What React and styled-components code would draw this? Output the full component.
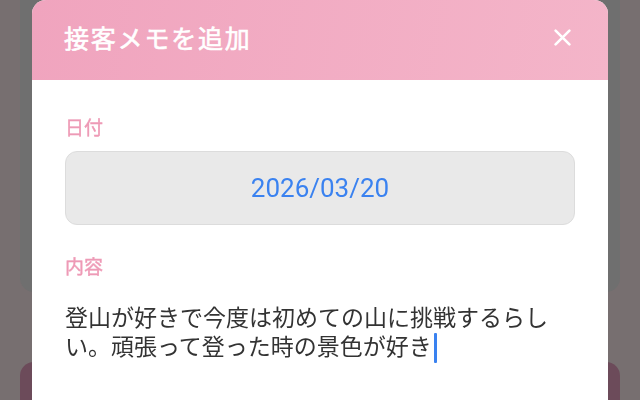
import React from 'react';
import styled, { createGlobalStyle } from 'styled-components';

const GlobalStyle = createGlobalStyle`
  html, body {
    margin: 0;
    padding: 0;
    width: 640px;
    height: 400px;
    overflow: hidden;
    background: #776f70;
    font-family: "Noto Sans CJK JP", "Noto Sans", sans-serif;
  }
`;

const Page = styled.div`
  height: 400px;
  padding: 0 20px;
  box-sizing: border-box;
  display: flex;
  flex-direction: column;
  justify-content: space-between;
`;

const BackCard = styled.div`
  height: 292px;
  background: #6f6f6f;
  border-radius: 0 0 14px 14px;
`;

const BackButton = styled.div`
  height: 38px;
  background: #6c4b5a;
  border-radius: 14px 14px 0 0;
`;

const Overlay = styled.div`
  position: fixed;
  inset: 0;
  display: flex;
  justify-content: center;
  align-items: flex-start;
`;

const Modal = styled.div`
  width: 576px;
  height: 460px;
  background: #fff;
  border-radius: 14px 14px 0 0;
  overflow: hidden;
  display: flex;
  flex-direction: column;
`;

const Header = styled.div`
  height: 80px;
  flex-shrink: 0;
  display: flex;
  align-items: center;
  justify-content: space-between;
  padding: 0 37px 6px 32px;
  box-sizing: border-box;
  background: linear-gradient(100deg, #f0a4be 0%, #f4b5c9 100%);
`;

const Title = styled.h2`
  margin: 0;
  color: #fff;
  font-size: 25px;
  font-weight: 400;
  letter-spacing: 1.8px;
  -webkit-text-stroke: 0.6px #fff;
`;

const CloseButton = styled.button`
  border: none;
  background: none;
  padding: 0;
  width: 18px;
  height: 18px;
  display: flex;
  align-items: center;
  justify-content: center;
  cursor: pointer;
`;

const Body = styled.div`
  padding: 35px 33px 0;
  display: flex;
  flex-direction: column;
`;

const Label = styled.div`
  color: #ee9ab6;
  font-size: 19px;
  font-weight: 400;
  line-height: 24px;
  -webkit-text-stroke: 0.4px #ee9ab6;
  margin-top: ${(p) => p.$top || 0}px;
`;

const DateField = styled.div`
  margin-top: 12px;
  height: 74px;
  box-sizing: border-box;
  border: 1px solid #dcdcdc;
  border-radius: 12px;
  background: #e9e9e9;
  display: flex;
  align-items: center;
  justify-content: center;
  color: #3a82f0;
  font-family: Roboto, "Liberation Sans", sans-serif;
  font-size: 26px;
`;

const Content = styled.div`
  margin-top: 24px;
  padding-right: 14px;
  color: #333;
  font-size: 23px;
  line-height: 29px;
`;

const Caret = styled.span`
  display: inline-block;
  width: 3px;
  height: 30px;
  margin-left: 2px;
  background: #3a82f0;
  border-radius: 1px;
  vertical-align: -8px;
`;

export default function App() {
  return (
    <>
      <GlobalStyle />
      <Page>
        <BackCard />
        <BackButton />
      </Page>
      <Overlay>
        <Modal>
          <Header>
            <Title>接客メモを追加</Title>
            <CloseButton aria-label="閉じる">
              <svg width="17" height="17" viewBox="0 0 16 16">
                <path d="M1.5 1.5 L14.5 14.5 M14.5 1.5 L1.5 14.5" stroke="#fff" strokeWidth="2.4" strokeLinecap="round" />
              </svg>
            </CloseButton>
          </Header>
          <Body>
            <Label>日付</Label>
            <DateField>2026/03/20</DateField>
            <Label $top={29}>内容</Label>
            <Content>
              登山が好きで今度は初めての山に挑戦するらしい。頑張って登った時の景色が好き
              <Caret />
            </Content>
          </Body>
        </Modal>
      </Overlay>
    </>
  );
}
